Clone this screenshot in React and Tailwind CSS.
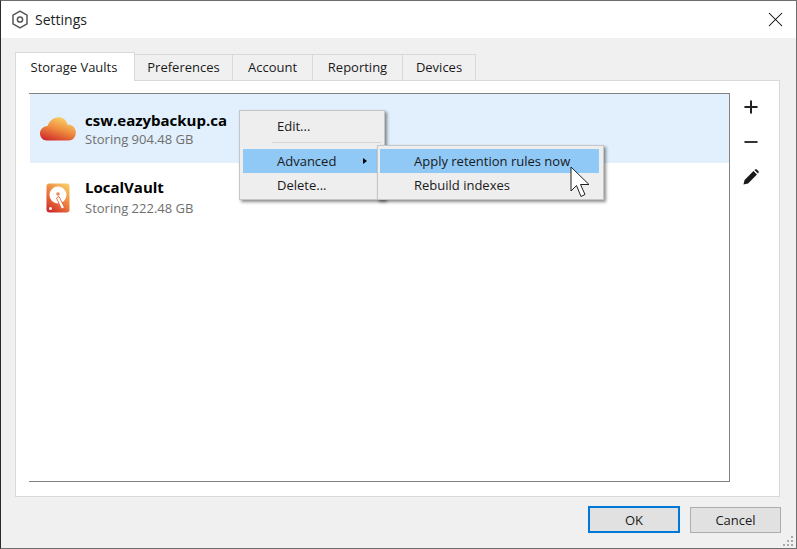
import { X, Plus, Minus } from 'lucide-react';

const tabs = ['Storage Vaults', 'Preferences', 'Account', 'Reporting', 'Devices'];

function SettingsIcon() {
    return (
        <svg width="18" height="19" viewBox="0 0 18 19" fill="none" stroke="#555" strokeWidth="1.5">
            <path d="M9 1.2 L16 5.2 V13.8 L9 17.8 L2 13.8 V5.2 Z" strokeLinejoin="round" />
            <circle cx="9" cy="9.5" r="2.6" />
        </svg>
    );
}

function CloudIcon() {
    return (
        <svg width="36" height="24" viewBox="0 0 36 24">
            <defs>
                <linearGradient id="cloudFill" x1="0.7" y1="0" x2="0.2" y2="1">
                    <stop offset="0" stopColor="#fbd46a" />
                    <stop offset="0.5" stopColor="#ee8a3e" />
                    <stop offset="1" stopColor="#cf2a2c" />
                </linearGradient>
            </defs>
            <path
                d="M7 23.5 C2.5 23.5 0 20 0 16.5 C0 12.5 3 9.5 7.5 9 C10 3 14.5 0.3 18.5 0.3 C23 0.3 26.5 3 27.5 7.5 C32.5 7.5 35.8 11 35.8 15.5 C35.8 20 33 23.5 28.5 23.5 Z"
                fill="url(#cloudFill)"
            />
        </svg>
    );
}

function DiskIcon() {
    return (
        <svg width="24" height="30" viewBox="0 0 24 30">
            <defs>
                <linearGradient id="diskFill" x1="0.8" y1="0" x2="0.2" y2="1">
                    <stop offset="0" stopColor="#f9c866" />
                    <stop offset="0.55" stopColor="#ea7a3a" />
                    <stop offset="1" stopColor="#cf2a2c" />
                </linearGradient>
            </defs>
            <rect x="0.5" y="0.5" width="23" height="29" rx="3" fill="url(#diskFill)" />
            <circle cx="12" cy="12" r="8.5" fill="#fff" />
            <circle cx="12" cy="11" r="1.8" fill="#e58a5a" />
            <path d="M10.5 15 L13 13.5 L18.5 24.5 L15.5 26 Z" fill="#fff" stroke="#d9583a" strokeWidth="0.8" />
            <circle cx="4.5" cy="25.5" r="1.5" fill="#fff" />
        </svg>
    );
}

function Cursor() {
    return (
        <svg width="21" height="33" viewBox="0 0 21 33" className="absolute left-[569px] top-[165px]">
            <path
                d="M1 1 V25 L6.5 19.5 L11 30.5 L15 28.5 L10.5 18.5 H19 Z"
                fill="#fff"
                stroke="#222"
                strokeWidth="1"
                strokeLinejoin="miter"
            />
        </svg>
    );
}

function Vault({ icon, name, size, selected }) {
    return (
        <div className={`h-[69px] flex items-center ${selected ? 'bg-[#e1f0fc]' : 'bg-white'}`}>
            <div className="w-[55px] flex justify-center pl-[1px]">{icon}</div>
            <div className="flex flex-col">
                <span className={`text-[15px] leading-[20px] font-bold text-black ${selected ? '' : '-mt-[2px] mb-[2px]'}`}>{name}</span>
                <span className="text-[13px] leading-[18px] text-[#6f6f6f]">{size}</span>
            </div>
        </div>
    );
}

export default function App() {
    return (
        <div
            className="relative w-[797px] h-[549px] flex flex-col bg-[#f0f0f0] border border-[#6e6e6e] border-l-[#2b2b2b] text-[13px] text-[#1a1a1a] overflow-hidden"
            style={{ fontFamily: '"Open Sans", "Noto Sans", sans-serif' }}
        >
            {/* Title bar */}
            <div className="h-[37px] shrink-0 bg-white flex items-center pl-[10px] pr-[8px]">
                <SettingsIcon />
                <span className="ml-[6px] text-[14px] text-[#222]">Settings</span>
                <X size={25} strokeWidth={1} className="ml-auto text-black" />
            </div>

            {/* Tabs */}
            <div className="flex items-end h-[42px] shrink-0 pl-[14px]">
                {tabs.map((tab, i) =>
                    i === 0 ? (
                        <div
                            key={tab}
                            className="h-[29px] w-[120px] relative top-[1px] z-10 flex items-center justify-center bg-white border border-b-0 border-[#d9d9d9] pt-[2px] pr-[2px]"
                        >
                            {tab}
                        </div>
                    ) : (
                        <div
                            key={tab}
                            className={`h-[26px] flex items-center justify-center bg-[#f0f0f0] border border-b-0 border-l-0 border-[#d9d9d9] ${
                                i === 1 ? 'w-[98px]' : i === 2 ? 'w-[80px]' : i === 3 ? 'w-[90px]' : 'w-[73px]'
                            }`}
                        >
                            {tab}
                        </div>
                    )
                )}
            </div>

            {/* Panel */}
            <div className="ml-[14px] mr-[16px] h-[417px] shrink-0 bg-white border border-[#d9d9d9] flex pt-[12px] pb-[14px] pl-[13px]">
                <div className="w-[701px] border-t border-r border-b border-[#828282] pl-[1px]">
                    <Vault selected icon={<CloudIcon />} name="csw.eazybackup.ca" size="Storing 904.48 GB" />
                    <Vault icon={<DiskIcon />} name="LocalVault" size="Storing 222.48 GB" />
                </div>
                <div className="flex-1 flex flex-col items-center pt-[4px] gap-[15px] pr-[7px]">
                    <Plus size={20} strokeWidth={2.4} className="text-[#222]" />
                    <Minus size={20} strokeWidth={2.4} className="text-[#333]" />
                    <svg width="16" height="16" viewBox="0 0 18 18" fill="#1a1a1a" className="mt-[2px]">
                        <path d="M0.5 17.5 L1.8 12.3 L11.8 2.3 L15.7 6.2 L5.7 16.2 Z" />
                        <path d="M12.9 1.2 L14 0.4 Q14.8 0 15.6 0.6 L17.4 2.4 Q18 3.2 17.6 4 L16.8 5.1 Z" />
                    </svg>
                </div>
            </div>

            {/* Footer buttons */}
            <div className="flex-1 flex items-start justify-end pt-[9px] pr-[15px] gap-[10px]">
                <button className="w-[92px] h-[27px] bg-[#e1e1e1] border-2 border-[#0078d7] text-[13px] pt-[2px]">OK</button>
                <button className="w-[91px] h-[26px] mt-[1px] bg-[#e1e1e1] border border-[#adadad] text-[13px] pt-[2px]">Cancel</button>
            </div>

            {/* Resize grip */}
            <div className="absolute right-[3px] bottom-[2px] grid grid-cols-3 gap-[2px]">
                {[0, 0, 1, 0, 1, 1, 1, 1, 1].map((on, i) => (
                    <div key={i} className={`w-[2px] h-[2px] ${on ? 'bg-[#a9a9a9]' : ''}`} />
                ))}
            </div>

            {/* Context menu */}
            <div className="absolute left-[238px] top-[109px] w-[146px] h-[90px] bg-[#eeeeee] border border-[#c6c6c6] shadow-[2px_2px_3px_rgba(0,0,0,0.45)] pt-[3px] px-[3px]">
                <div className="h-[24px] pl-[34px] pt-[2px] flex items-center">Edit...</div>
                <div className="h-[1px] bg-[#d4d4d4] ml-[29px] mt-[4px] mb-[6px]" />
                <div className="h-[24px] pl-[34px] pt-[2px] pr-[14px] flex items-center justify-between bg-[#90c8f6]">
                    Advanced
                    <span className="w-0 h-0 border-y-[3.5px] border-y-transparent border-l-[4px] border-l-black -mt-[2px]" />
                </div>
                <div className="h-[24px] pl-[34px] pt-[2px] flex items-center">Delete...</div>
            </div>

            {/* Submenu */}
            <div className="absolute left-[376px] top-[144px] w-[227px] h-[55px] bg-[#eeeeee] border border-[#c6c6c6] shadow-[2px_2px_3px_rgba(0,0,0,0.45)] pt-[3px] pl-[2px] pr-[4px]">
                <div className="h-[24px] pl-[34px] pt-[2px] flex items-center bg-[#90c8f6]">Apply retention rules now</div>
                <div className="h-[24px] pl-[34px] pt-[2px] flex items-center">Rebuild indexes</div>
            </div>

            <Cursor />
        </div>
    );
}
